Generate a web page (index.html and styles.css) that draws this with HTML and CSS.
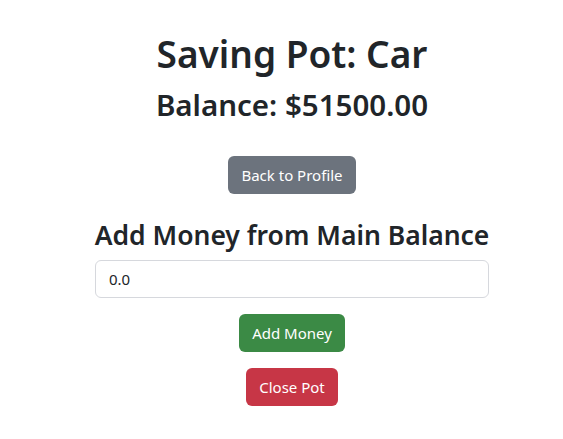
FILE: index.html
```html
<!DOCTYPE html>
<html>
<head>
<meta charset="utf-8">
<link rel="stylesheet" href="styles.css">
</head>
<body>
<main class="page">
  <h1 class="title">Saving Pot: Car</h1>
  <h2 class="balance">Balance: $51500.00</h2>
  <button class="btn btn-secondary mt-4">Back to Profile</button>
  <h3 class="subtitle mt-4">Add Money from Main Balance</h3>
  <form class="form">
    <input class="input" type="text" value="0.0">
    <button type="button" class="btn btn-success mt-3">Add Money</button>
  </form>
  <button class="btn btn-danger mt-3">Close Pot</button>
</main>
</body>
</html>
```
FILE: styles.css
```css
* { box-sizing: border-box; }
html, body { margin: 0; background: #fff; }
body {
  font-family: "Noto Sans", "Open Sans", sans-serif;
  color: #212529;
  font-size: 16px;
  line-height: 1.5;
}
.page {
  display: flex;
  flex-direction: column;
  align-items: center;
  padding: 30px 0 0 21px;
}
.title, .balance, .subtitle {
  margin: 0 0 8px;
  font-weight: 600;
  color: #212529;
}
.title { font-size: 37px; line-height: 48px; }
.balance { font-size: 29.5px; line-height: 38px; }
.subtitle { font-size: 26.5px; line-height: 34px; }
.mt-4 { margin-top: 24px; }
.mt-3 { margin-top: 16px; }
.form {
  width: 394px;
  display: flex;
  flex-direction: column;
  align-items: center;
  margin: 0;
}
.input {
  width: 100%;
  height: 38px;
  padding: 6px 13px;
  font: inherit;
  font-size: 15px;
  color: #212529;
  border: 1px solid #d6d8dd;
  border-radius: 6px;
}
.btn {
  font: inherit;
  font-size: 15px;
  border: 1px solid transparent;
  border-radius: 6px;
  padding: 6px 12px;
  color: #fff;
  height: 38px;
  line-height: 24px;
}
.btn-secondary { background: #6c737d; }
.btn-success { background: #3b8a45; }
.btn-danger { background: #c73646; }
```
